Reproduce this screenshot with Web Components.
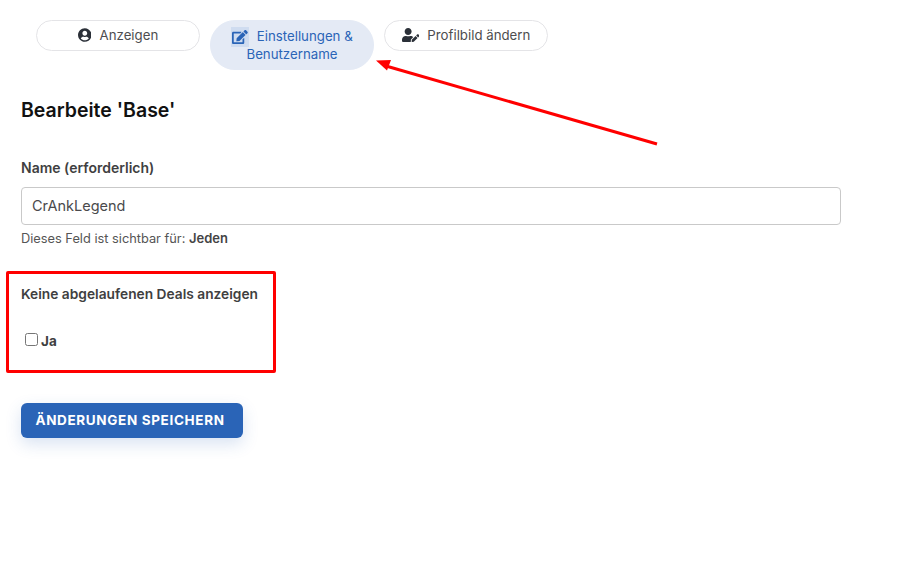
<!DOCTYPE html>
<html lang="de">
<head>
<meta charset="utf-8">
<title>Bearbeite Base</title>
<style>
  html, body { margin: 0; background: #fff; }
  body { font-family: "Inter", "Liberation Sans", sans-serif; }
</style>
</head>
<body>
<profile-page>
  <profile-tabs>
    <profile-tab icon="user">Anzeigen</profile-tab>
    <profile-tab icon="edit" active>Einstellungen &amp; Benutzername</profile-tab>
    <profile-tab icon="user-pen">Profilbild ändern</profile-tab>
  </profile-tabs>
  <edit-form></edit-form>
  <note-arrow></note-arrow>
</profile-page>

<script>
const icons = {
  user: `<svg viewBox="0 0 496 512" height="14" width="13.6"><path fill="currentColor" d="M248 8C111 8 0 119 0 256s111 248 248 248 248-111 248-248S385 8 248 8zm0 96c48.600 0 88 39.400 88 88s-39.400 88-88 88-88-39.400-88-88 39.400-88 88-88zm0 344c-58.700 0-111.300-26.600-146.500-68.200 18.800-35.400 55.600-59.800 98.500-59.800 2.400 0 4.800.4 7.100 1.100 13 4.200 26.600 6.900 40.900 6.900 14.300 0 28-2.700 40.900-6.900 2.300-.7 4.700-1.100 7.100-1.100 42.900 0 79.700 24.400 98.500 59.800C359.300 421.400 306.700 448 248 448z"/></svg>`,
  edit: `<svg viewBox="0 0 576 512" height="14" width="15.750"><path fill="currentColor" d="M402.600 83.200l90.200 90.200c3.800 3.800 3.800 10 0 13.800L274.400 405.600l-92.800 10.300c-12.400 1.400-22.900-9.100-21.500-21.500l10.300-92.800L388.800 83.200c3.800-3.800 10-3.800 13.800 0zm162-22.900l-48.800-48.800c-15.200-15.200-39.900-15.200-55.200 0l-35.400 35.400c-3.800 3.800-3.800 10 0 13.800l90.200 90.200c3.800 3.800 10 3.800 13.800 0l35.400-35.400c15.200-15.300 15.200-40 0-55.200zM384 346.200V448H64V128h229.800c3.200 0 6.200-1.300 8.500-3.500l40-40c7.600-7.600 2.200-20.500-8.500-20.500H48C21.500 64 0 85.500 0 112v352c0 26.500 21.500 48 48 48h352c26.500 0 48-21.500 48-48V306.200c0-10.700-12.900-16-20.500-8.500l-40 40c-2.200 2.300-3.500 5.300-3.500 8.500z"/></svg>`,
  'user-pen': `<svg viewBox="0 0 640 512" height="14" width="17.500"><path fill="currentColor" d="M224 256c70.700 0 128-57.300 128-128S294.700 0 224 0 96 57.300 96 128s57.300 128 128 128zm89.600 32h-16.700c-22.200 10.200-46.900 16-72.900 16s-50.600-5.800-72.900-16h-16.700C60.200 288 0 348.200 0 422.400V464c0 26.500 21.500 48 48 48h274.900c-2.400-6.800-3.400-14-2.600-21.300l6.800-60.900 1.200-11.100 7.900-7.900 77.300-77.300c-24.500-27.700-60-45.500-100.100-45.500zm45.300 145.300l-6.800 61c-1.100 10.200 7.500 18.800 17.600 17.600l60.900-6.800 137.900-137.900-71.700-71.700-137.900 137.800zM633 268.900L595.100 231c-9.300-9.300-24.500-9.300-33.800 0l-37.800 37.800-4.100 4.100 71.800 71.700 41.800-41.800c9.300-9.400 9.300-24.500 0-33.900z"/></svg>`
};

class ProfilePage extends HTMLElement {
  connectedCallback() {
    this.attachShadow({ mode: 'open' });
    this.shadowRoot.innerHTML = `
      <style>
        :host {
          display: block;
          position: relative;
          height: 572px;
          overflow: hidden;
          box-sizing: border-box;
          padding-top: 20px;
        }
      </style>
      <slot></slot>
    `;
  }
}

class ProfileTabs extends HTMLElement {
  connectedCallback() {
    this.attachShadow({ mode: 'open' });
    this.shadowRoot.innerHTML = `
      <style>
        :host {
          display: flex;
          align-items: flex-start;
          gap: 10px;
          padding-left: 36px;
        }
      </style>
      <slot></slot>
    `;
  }
}

class ProfileTab extends HTMLElement {
  connectedCallback() {
    this.attachShadow({ mode: 'open' });
    this.shadowRoot.innerHTML = `
      <style>
        :host {
          display: block;
          box-sizing: border-box;
          width: 164px;
          padding: 5px 12px 6px;
          border: 1px solid #e4e4e7;
          border-radius: 25px;
          color: #4d4d4f;
          font-size: 13.25px;
          line-height: 18px;
          text-align: center;
        }
        :host([active]) {
          padding-top: 6px;
          padding-bottom: 6px;
          border-color: #e4eaf5;
          background: #e4eaf5;
          color: #2a64b7;
        }
        .icon {
          display: inline-block;
          height: 14px;
          margin: -2px 4.5px -2px 0;
          color: #2b3038;
          vertical-align: 0;
        }
        .icon svg { display: block; }
        :host([active]) .icon {
          margin: -3px 4px -3px 0;
          padding: 3px 1px;
          background: #cfdcf0;
          color: #2a64b7;
          vertical-align: -3px;
        }
      </style>
      <span class="icon">${icons[this.getAttribute('icon')]}</span>
      <slot></slot>
    `;
  }
}

class EditForm extends HTMLElement {
  connectedCallback() {
    this.attachShadow({ mode: 'open' });
    this.shadowRoot.innerHTML = `
      <style>
        :host {
          display: block;
          padding: 29px 0 0 21px;
          color: #3f3f41;
          font-size: 14px;
        }
        h2 {
          margin: 0;
          color: #111;
          font-size: 19.500px;
          font-weight: 600;
          line-height: 22px;
        }
        .label {
          display: block;
          margin: 37px 0 9px;
          font-weight: 600;
          line-height: 20px;
        }
        input[type=text] {
          display: block;
          box-sizing: border-box;
          width: 820px;
          height: 38px;
          padding: 0 10px 2px;
          border: 1px solid #c9c9c9;
          border-radius: 4px;
          color: #4a4a4c;
          font: 14.500px "Inter", "Liberation Sans", sans-serif;
          outline: none;
        }
        .help {
          height: 18px;
          margin-top: 4px;
          color: #555;
          font-size: 12.800px;
          line-height: 18px;
        }
        .help b { font-size: 13px; font-weight: 600; color: #444; }
        .box {
          box-sizing: border-box;
          width: 270px;
          height: 102px;
          margin: 24px 0 30px -15px;
          padding: 10px 0 0 12px;
          border: 3px solid #f00;
          border-radius: 2px;
        }
        .box .title { font-weight: 600; font-size: 13.750px; line-height: 20px; }
        .check {
          display: flex;
          align-items: center;
          gap: 3px;
          margin: 26px 0 0 4px;
          font-weight: 700;
          font-size: 13.500px;
          line-height: 20px;
        }
        .check input { position: relative; top: -1px; margin: 0; width: 13px; height: 13px; }
        .check span { padding-top: 1px; }
        button {
          display: block;
          width: 222px;
          height: 35px;
          padding: 0 4px 2px 0;
          border: 0;
          border-radius: 6px;
          background: #2a64b7;
          box-shadow: 0 6px 16px rgba(42, 100, 183, .18);
          color: #fff;
          font: 700 13.5px "Inter", "Liberation Sans", sans-serif;
          letter-spacing: .65px;
          text-transform: uppercase;
        }
      </style>
      <h2>Bearbeite 'Base'</h2>
      <label class="label" for="name">Name (erforderlich)</label>
      <input id="name" type="text" value="CrAnkLegend">
      <div class="help">Dieses Feld ist sichtbar für: <b>Jeden</b></div>
      <div class="box">
        <div class="title">Keine abgelaufenen Deals anzeigen</div>
        <label class="check"><input type="checkbox"><span>Ja</span></label>
      </div>
      <button type="button">Änderungen speichern</button>
    `;
  }
}

// red annotation arrow drawn over the page
class NoteArrow extends HTMLElement {
  connectedCallback() {
    this.attachShadow({ mode: 'open' });
    this.shadowRoot.innerHTML = `
      <style>
        :host { display: block; position: absolute; left: 370px; top: 55px; width: 295px; height: 95px; pointer-events: none; }
      </style>
      <svg width="295" height="95" viewBox="0 0 295 95">
        <path d="M287 89 L16 11" stroke="#f00" stroke-width="3" fill="none"/>
        <path d="M6 5.500 L21 5 L17 15.500 Z" fill="#f00"/>
      </svg>
    `;
  }
}

customElements.define('profile-page', ProfilePage);
customElements.define('profile-tabs', ProfileTabs);
customElements.define('profile-tab', ProfileTab);
customElements.define('edit-form', EditForm);
customElements.define('note-arrow', NoteArrow);
</script>
</body>
</html>
